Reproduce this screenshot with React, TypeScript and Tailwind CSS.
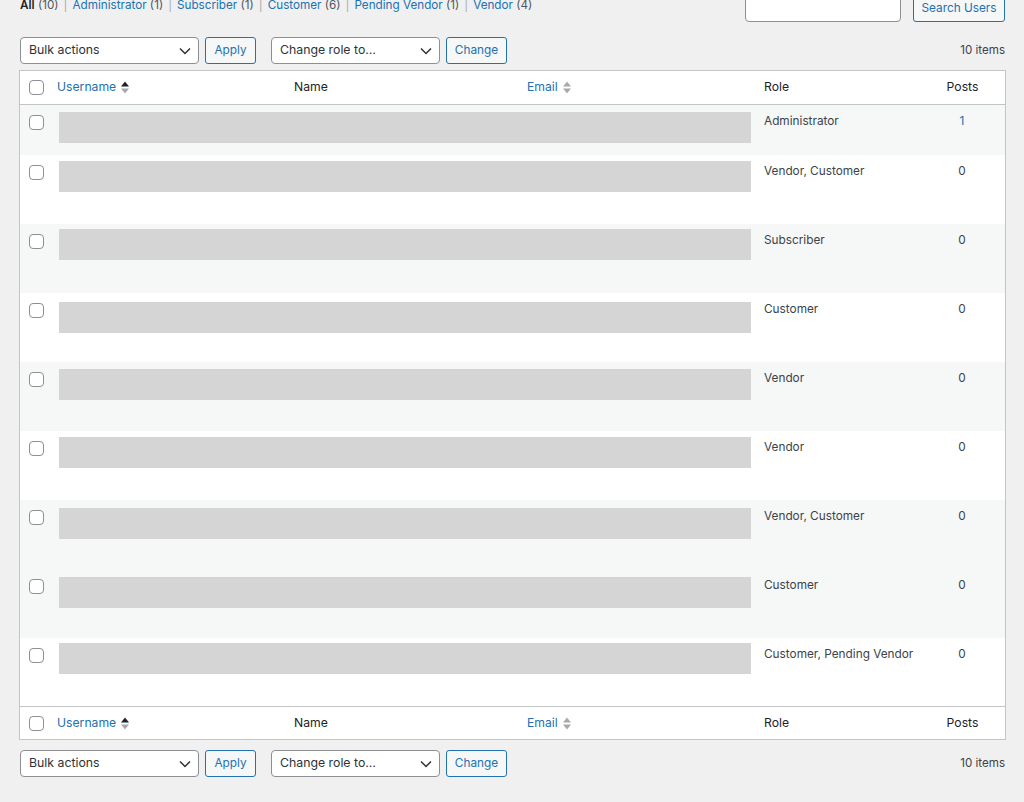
import React from 'react'

const rows = [
  { role: 'Administrator', posts: '1', h: 'h-[50px]', top: 'mt-[7px]', bg: 'bg-[#f6f7f7]' },
  { role: 'Vendor, Customer', posts: '0', h: 'h-[69px]', top: 'mt-[6px]', bg: 'bg-white' },
  { role: 'Subscriber', posts: '0', h: 'h-[69px]', top: 'mt-[5px]', bg: 'bg-[#f6f7f7]' },
  { role: 'Customer', posts: '0', h: 'h-[69px]', top: 'mt-[9px]', bg: 'bg-white' },
  { role: 'Vendor', posts: '0', h: 'h-[69px]', top: 'mt-[7px]', bg: 'bg-[#f6f7f7]' },
  { role: 'Vendor', posts: '0', h: 'h-[69px]', top: 'mt-[6px]', bg: 'bg-white' },
  { role: 'Vendor, Customer', posts: '0', h: 'h-[69px]', top: 'mt-[8px]', bg: 'bg-[#f6f7f7]' },
  { role: 'Customer', posts: '0', h: 'h-[69px]', top: 'mt-[8px]', bg: 'bg-[#f6f7f7]' },
  { role: 'Customer, Pending Vendor', posts: '0', h: 'h-[68px]', top: 'mt-[5px]', bg: 'bg-white' },
]

const cols = 'grid grid-cols-[29px_237px_233px_237px_163px_86px]'

function Checkbox({ className = '' }: { className?: string }) {
  return (
    <span
      className={`block w-[15px] h-[15px] rounded-[4px] border border-[#8c8f94] bg-white ${className}`}
    />
  )
}

function SortIcon({ active }: { active?: boolean }) {
  return (
    <svg width="8" height="13" viewBox="0 0 8 13" className="ml-[5px] mt-[1px]">
      <path d="M4 0.5 L8 5.5 L0 5.5 Z" fill={active ? '#1d2327' : '#a7aaad'} />
      <path d="M0 7.5 L8 7.5 L4 12.5 Z" fill="#a7aaad" />
    </svg>
  )
}

function Chevron() {
  return (
    <svg width="12" height="8" viewBox="0 0 12 8" className="shrink-0">
      <path d="M1 1.5 L6 6.5 L11 1.5" fill="none" stroke="#2c3338" strokeWidth="1.5" />
    </svg>
  )
}

function Select({ label, w }: { label: string; w: string }) {
  return (
    <div
      className={`${w} h-[27px] flex items-center justify-between pl-[8px] pr-[7px] bg-white border border-[#8c8f94] rounded-[4px] text-[12.3px] text-[#2c3338]`}
    >
      <span>{label}</span>
      <Chevron />
    </div>
  )
}

function Button({ label, w }: { label: string; w: string }) {
  return (
    <div
      className={`${w} h-[27px] flex items-center justify-center bg-[#f6f7f7] border border-[#2271b1] rounded-[3px] text-[11.8px] text-[#2271b1]`}
    >
      {label}
    </div>
  )
}

function Toolbar({ className = '' }: { className?: string }) {
  return (
    <div className={`flex items-center ${className}`}>
      <Select label="Bulk actions" w="w-[179px]" />
      <div className="ml-[6px]">
        <Button label="Apply" w="w-[51px]" />
      </div>
      <div className="ml-[15px]">
        <Select label="Change role to…" w="w-[169px]" />
      </div>
      <div className="ml-[6px]">
        <Button label="Change" w="w-[61px]" />
      </div>
      <span className="ml-auto mr-[1px] text-[11.6px] text-[#3c434a]">10 items</span>
    </div>
  )
}

function HeaderRow({ bottom }: { bottom?: boolean }) {
  return (
    <div
      className={`${cols} ${bottom ? 'h-[33px] border-t' : 'h-[34px] border-b'} border-[#c3c4c7] items-center text-[12.2px] text-[#1d2327] bg-white`}
    >
      <div className="pl-[9px]">
        <Checkbox />
      </div>
      <div className="pl-[8px] flex items-center text-[#2271b1]">
        Username
        <SortIcon active />
      </div>
      <div className="pl-[8px]">Name</div>
      <div className="pl-[8px] flex items-center text-[#2271b1]">
        Email
        <SortIcon />
      </div>
      <div className="pl-[8px]">Role</div>
      <div className="text-center pl-[1px]">Posts</div>
    </div>
  )
}

export default function App() {
  return (
    <div
      className="h-[802px] overflow-hidden bg-[#f0f0f1] pl-[19px] pr-[18px]"
      style={{ fontFamily: 'Inter, "Liberation Sans", sans-serif' }}
    >
      <div className="flex items-start justify-between h-[30px] -mt-[8px]">
        <div className="pt-[3px] leading-5 text-[11.7px] text-[#50575e] pl-[1px]">
          <span className="font-semibold text-[#1d2327]">All</span> (10)
          <span className="mx-[5px] text-[#a7aaad]">|</span>
          <span className="text-[#2271b1]">Administrator</span> (1)
          <span className="mx-[5px] text-[#a7aaad]">|</span>
          <span className="text-[#2271b1]">Subscriber</span> (1)
          <span className="mx-[5px] text-[#a7aaad]">|</span>
          <span className="text-[#2271b1]">Customer</span> (6)
          <span className="mx-[5px] text-[#a7aaad]">|</span>
          <span className="text-[#2271b1]">Pending Vendor</span> (1)
          <span className="mx-[5px] text-[#a7aaad]">|</span>
          <span className="text-[#2271b1]">Vendor</span> (4)
        </div>
        <div className="flex items-end h-[30px] mr-[1px]">
          <div className="w-[156px] h-[30px] bg-white border border-[#8c8f94] rounded-[4px]" />
          <div className="ml-[12px] w-[92px] h-[26px] flex items-center justify-center bg-[#f6f7f7] border border-[#2271b1] rounded-[3px] text-[11.8px] text-[#2271b1]">
            Search Users
          </div>
        </div>
      </div>

      <Toolbar className="mt-[15px] pl-[1px]" />

      <div className="mt-[6px] border border-[#c3c4c7] bg-white">
        <HeaderRow />
        {rows.map((r, i) => (
          <div key={i} className={`${cols} ${r.h} ${r.bg} text-[11.8px] text-[#3c434a]`}>
            <div className="pl-[9px] pt-[10px]">
              <Checkbox />
            </div>
            <div className="col-span-3 pl-[10px] pr-[5px]">
              <div className={`${r.top} h-[31px] bg-[#d5d5d5]`} />
            </div>
            <div className="pl-[8px] pt-[6px] leading-5 whitespace-nowrap">{r.role}</div>
            <div className={`pt-[6px] leading-5 text-center ${r.posts === '1' ? 'text-[#2271b1]' : ''}`}>
              {r.posts}
            </div>
          </div>
        ))}
        <HeaderRow bottom />
      </div>

      <Toolbar className="mt-[10px] pl-[1px]" />
    </div>
  )
}
